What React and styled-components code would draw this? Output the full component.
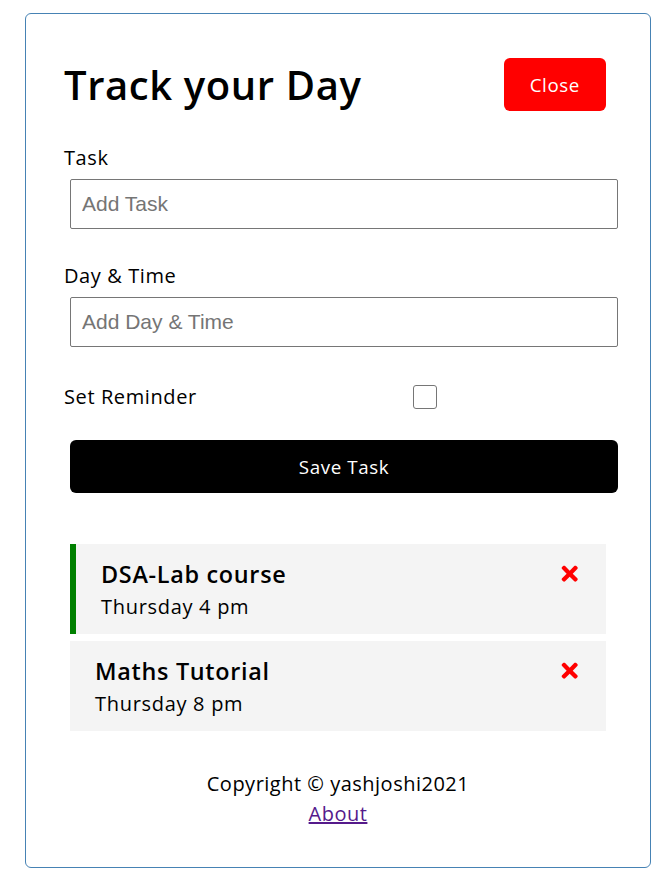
import React from "react";
import styled, { createGlobalStyle } from "styled-components";
import { FaTimes } from "react-icons/fa";

const GlobalStyle = createGlobalStyle`
  * {
    box-sizing: border-box;
    margin: 0;
    padding: 0;
  }
  body {
    font-family: "Open Sans", "DejaVu Sans", sans-serif;
    background: #fff;
    color: #000;
  }
`;

const Container = styled.div`
  width: 626px;
  margin: 13px 0 0 25px;
  border: 1px solid steelblue;
  border-radius: 6px;
  padding: 38px;
`;

const Header = styled.header`
  display: flex;
  justify-content: space-between;
  align-items: center;
  margin-bottom: 25px;
`;

const Title = styled.h1`
  font-size: 40px;
  font-weight: 600;
  letter-spacing: 0.6px;
`;

const Button = styled.button`
  display: ${(p) => (p.$block ? "block" : "inline-block")};
  width: ${(p) => (p.$block ? "100%" : "auto")};
  background: ${(p) => p.$color || "#000"};
  color: #fff;
  border: none;
  margin: 6px;
  padding: 0 26px;
  height: 53px;
  border-radius: 6px;
  font-family: inherit;
  font-size: 18.75px;
  letter-spacing: 0.6px;
  cursor: pointer;
`;

const Form = styled.form`
  margin-bottom: 51px;
`;

const Control = styled.div`
  display: flex;
  flex-direction: column;
  margin: 25px 0;
  &:first-child {
    margin-top: 0;
  }
`;

const CheckControl = styled.div`
  display: flex;
  align-items: center;
  justify-content: space-between;
  height: 37px;
  margin: 25px 0;
`;

const Label = styled.label`
  display: block;
  font-size: 20px;
  line-height: 31px;
  letter-spacing: 0.6px;
  flex: 1;
`;

const TextInput = styled.input`
  display: block;
  width: 100%;
  height: 50px;
  margin: 6px;
  padding: 4px 11px;
  font-family: "Liberation Sans", Arial, sans-serif;
  font-size: 21px;
  border: 1px solid #767676;
  border-radius: 2px;
  &::placeholder {
    color: #757575;
  }
`;

const CheckWrap = styled.div`
  flex: 2;
  display: flex;
  justify-content: center;
  padding-right: 6px;
`;

const Check = styled.input`
  appearance: none;
  width: 24px;
  height: 24px;
  border: 1px solid #767676;
  border-radius: 3px;
  background: #fff;
`;

const TaskList = styled.div`
  display: flex;
  flex-direction: column;
  gap: 7px;
`;

const Task = styled.div`
  background: #f4f4f4;
  margin: 0 6px;
  padding: 12.5px 25px;
  border-left: ${(p) => (p.$reminder ? "6px solid green" : "none")};
  cursor: pointer;
`;

const TaskName = styled.h3`
  display: flex;
  align-items: center;
  justify-content: space-between;
  font-size: 23.4px;
  font-weight: 600;
  line-height: 35px;
  letter-spacing: 0.7px;
  svg {
    color: red;
  }
`;

const TaskDay = styled.p`
  font-size: 20px;
  line-height: 30px;
  letter-spacing: 0.7px;
`;

const Footer = styled.footer`
  margin-top: 38px;
  text-align: center;
  font-size: 20px;
  line-height: 30px;
  letter-spacing: 0.5px;
  a {
    color: #551a8b;
  }
`;

const tasks = [
  { id: 1, text: "DSA-Lab course", day: "Thursday 4 pm", reminder: true },
  { id: 2, text: "Maths Tutorial", day: "Thursday 8 pm", reminder: false },
];

export default function App() {
  return (
    <>
      <GlobalStyle />
      <Container>
        <Header>
          <Title>Track your Day</Title>
          <Button $color="red">Close</Button>
        </Header>
        <Form onSubmit={(e) => e.preventDefault()}>
          <Control>
            <Label>Task</Label>
            <TextInput type="text" placeholder="Add Task" />
          </Control>
          <Control>
            <Label>Day &amp; Time</Label>
            <TextInput type="text" placeholder="Add Day & Time" />
          </Control>
          <CheckControl>
            <Label>Set Reminder</Label>
            <CheckWrap>
              <Check type="checkbox" />
            </CheckWrap>
          </CheckControl>
          <Button $block type="submit">
            Save Task
          </Button>
        </Form>
        <TaskList>
          {tasks.map((t) => (
            <Task key={t.id} $reminder={t.reminder}>
              <TaskName>
                {t.text}
                <FaTimes />
              </TaskName>
              <TaskDay>{t.day}</TaskDay>
            </Task>
          ))}
        </TaskList>
        <Footer>
          <p>Copyright &copy; yashjoshi2021</p>
          <a href="#about">About</a>
        </Footer>
      </Container>
    </>
  );
}
